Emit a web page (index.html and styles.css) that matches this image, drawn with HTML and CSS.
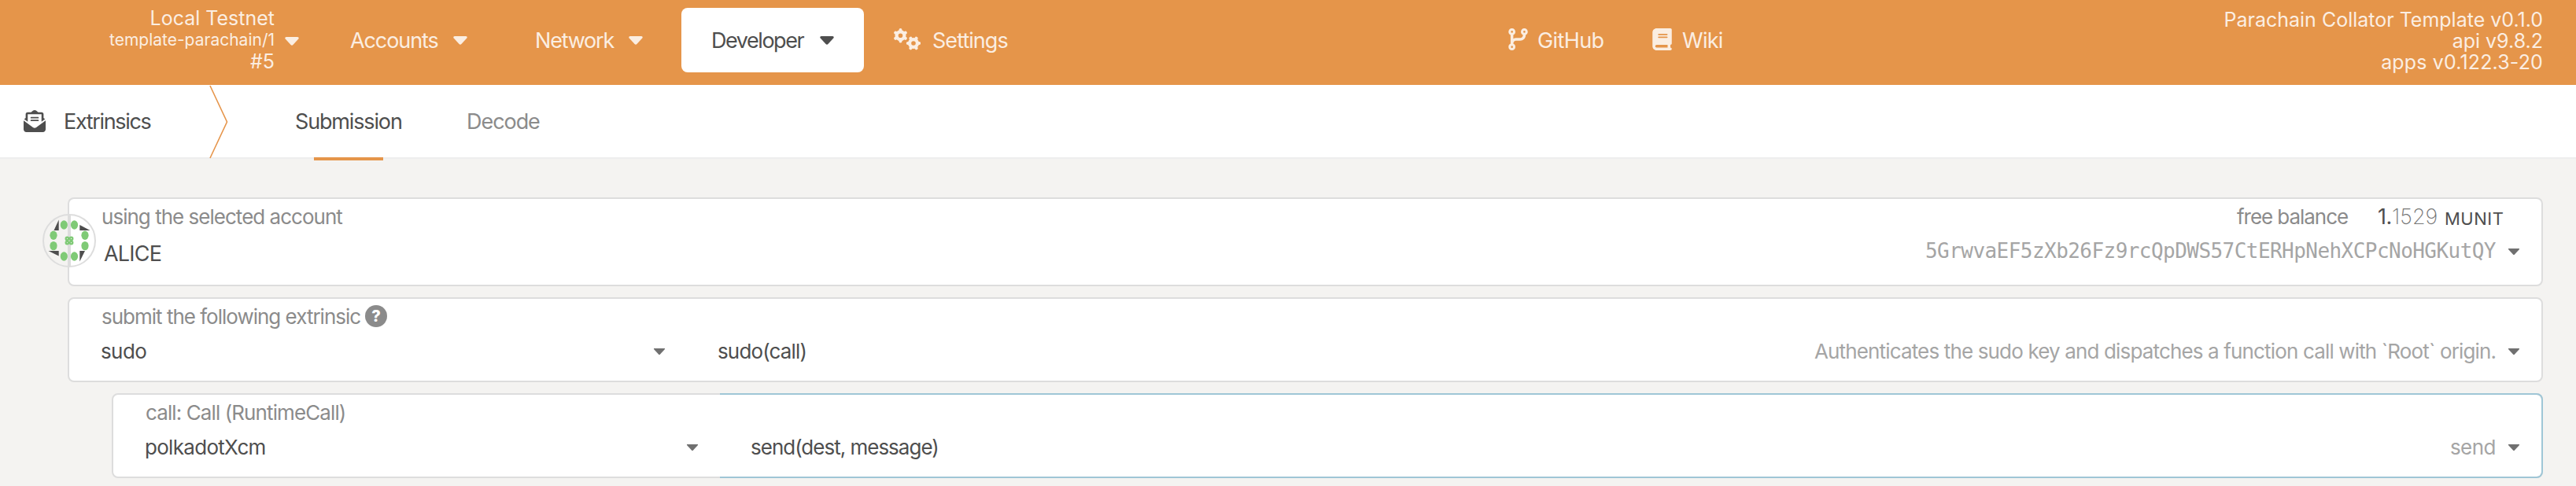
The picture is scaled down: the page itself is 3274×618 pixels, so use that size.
FILE: index.html
```html
<!DOCTYPE html>
<html lang="en">
<head>
<meta charset="utf-8">
<title>Extrinsics</title>
<link rel="stylesheet" href="styles.css">
</head>
<body>
<header class="topbar">
  <div class="chain">
    <div class="chain-name"><span>Local Testnet</span></div>
    <div class="chain-spec"><span>template-parachain/1</span></div>
    <div class="chain-block"><span>#5</span></div>
  </div>
  <svg class="caret caret-chain" viewBox="0 0 18 11"><path d="M1.8 0H16.2Q18.6 .6 17.3 2.4L10.4 10Q9 11.4 7.6 10L.7 2.4Q-.6 .6 1.8 0Z"/></svg>
  <div class="nav nav-accounts"><span class="accounts">Accounts</span><svg class="caret" viewBox="0 0 18 11"><path d="M1.8 0H16.2Q18.6 .6 17.3 2.4L10.4 10Q9 11.4 7.6 10L.7 2.4Q-.6 .6 1.8 0Z"/></svg></div>
  <div class="nav nav-network"><span class="network">Network</span><svg class="caret" viewBox="0 0 18 11"><path d="M1.8 0H16.2Q18.6 .6 17.3 2.4L10.4 10Q9 11.4 7.6 10L.7 2.4Q-.6 .6 1.8 0Z"/></svg></div>
  <div class="nav nav-developer"><span class="developer">Developer</span><svg class="caret" viewBox="0 0 18 11"><path d="M1.8 0H16.2Q18.6 .6 17.3 2.4L10.4 10Q9 11.4 7.6 10L.7 2.4Q-.6 .6 1.8 0Z"/></svg></div>
  <div class="nav nav-settings">
    <svg class="gears" viewBox="0 0 34 28" fill="none" stroke="currentColor">
      <circle cx="8.5" cy="9.2" r="4.9" stroke-width="4.2"/><path stroke-width="4" stroke-linecap="round" d="M8.500 2V3.400M8.500 15V16.400M2.200 5.600L3.500 6.300M13.500 12.100L14.800 12.800M2.200 12.800L3.500 12.100M13.500 6.300L14.800 5.600"/>
      <circle cx="25" cy="19" r="4.9" stroke-width="4.2"/><path stroke-width="4" stroke-linecap="round" d="M17.800 19H19.200M30.800 19H32.200M21.400 12.700L22.100 14M27.900 24L28.600 25.300M28.600 12.700L27.900 14M22.100 24L21.400 25.300"/>
    </svg><span class="settings">Settings</span></div>
  <div class="nav nav-github"><svg class="fork" viewBox="0 0 448 512"><path fill="currentColor" d="M80 104a24 24 0 1 0 0-48 24 24 0 1 0 0 48zm80-24c0 32.800-19.700 61-48 73.300v87.800c18.800-10.900 40.700-17.100 64-17.100h96c35.300 0 64-28.700 64-64v-6.700C307.700 141 288 112.800 288 80c0-44.200 35.800-80 80-80s80 35.800 80 80c0 32.800-19.700 61-48 73.300V160c0 70.700-57.300 128-128 128H176c-35.300 0-64 28.700-64 64v6.700c28.300 12.300 48 40.500 48 73.300 0 44.200-35.800 80-80 80S0 476.200 0 432c0-32.800 19.700-61 48-73.300V153.300C19.700 141 0 112.800 0 80 0 35.800 35.800 0 80 0s80 35.800 80 80zm232 0a24 24 0 1 0-48 0 24 24 0 1 0 48 0zM80 456a24 24 0 1 0 0-48 24 24 0 1 0 0 48z"/></svg><span class="github">GitHub</span></div>
  <div class="nav nav-wiki"><svg class="book" viewBox="0 0 448 512"><path fill="currentColor" d="M96 0C43 0 0 43 0 96v320c0 53 43 96 96 96h320c17.700 0 32-14.300 32-32s-14.300-32-32-32v-64c17.700 0 32-14.300 32-32V32c0-17.700-14.300-32-32-32H96zm0 384h256v64H96c-17.700 0-32-14.300-32-32s14.300-32 32-32zm32-240c0-8.800 7.200-16 16-16h192c8.800 0 16 7.200 16 16s-7.200 16-16 16H144c-8.800 0-16-7.200-16-16zm16 48h192c8.800 0 16 7.200 16 16s-7.200 16-16 16H144c-8.800 0-16-7.200-16-16s7.200-16 16-16z"/></svg><span class="wiki">Wiki</span></div>
  <div class="versions">
    <div><span>Parachain Collator Template v0.1.0</span></div>
    <div><span>api v9.8.2</span></div>
    <div><span class="apps">apps v0.122.3-20</span></div>
  </div>
</header>
<nav class="tabs">
  <svg class="envelope" viewBox="0 0 512 512"><g fill="currentColor"><path d="M215.400 48H339.400L289.500 11Q256 -11 222.500 11L172.600 48ZM96 48H416Q464 48 464 96V181L493 204Q512 219 505 204L416 270V96H96V270L7 204Q0 219 19 204L48 181V96Q48 48 96 48Z"/><path d="M0 448V242L217.600 403.300C228.700 411.500 242.200 416 256 416S283.300 411.600 294.400 403.300L512 242V448C512 483.300 483.300 512 448 512H64C28.700 512 0 483.300 0 448Z"/><path d="M176 160H336Q352 160 352 176T336 192H176Q160 192 160 176T176 160ZM176 224H336Q352 224 352 240T336 256H176Q160 256 160 240T176 224Z"/></g></svg>
  <span class="title">Extrinsics</span>
  <svg class="divider" viewBox="0 0 24 94"><path d="M1 1L22.500 47L1 93" fill="none" stroke="#e6954a" stroke-width="1.600"/></svg>
  <div class="tab tab-active"><span class="submission">Submission</span></div>
  <div class="tab"><span class="decode">Decode</span></div>
</nav>
<main>
  <section class="card card-account">
    <svg class="identicon" viewBox="0 0 68 68">
      <circle cx="34" cy="34" r="33" fill="none" stroke="#ddd" stroke-width="2"/>
      <path d="M35 2V66" stroke="#ddd" stroke-width="2"/>
      <g fill="#7fca76"><ellipse cx="27.300" cy="14" rx="4.600" ry="5.700"/><ellipse cx="40.500" cy="14" rx="4.600" ry="5.700"/><ellipse cx="27.300" cy="54" rx="4.600" ry="5.700"/><ellipse cx="40.500" cy="54" rx="4.600" ry="5.700"/><ellipse cx="14" cy="27.300" rx="4.600" ry="5.700"/><ellipse cx="14" cy="40.600" rx="4.600" ry="5.700"/><ellipse cx="54" cy="27.300" rx="4.600" ry="5.700"/><ellipse cx="54" cy="40.600" rx="4.600" ry="5.700"/></g>
      <g fill="none" stroke="#7fca76" stroke-width="2.300"><circle cx="31.400" cy="31.400" r="1.700"/><circle cx="36.600" cy="31.400" r="1.700"/><circle cx="31.400" cy="36.600" r="1.700"/><circle cx="36.600" cy="36.600" r="1.700"/></g>
      <path fill="#4e4e4e" d="M20.700 7.500V21H14.500ZM47.300 14V21H60.500ZM7.500 47H20.700V53.500ZM47.300 47H54L47.300 60.500Z"/>
    </svg>
    <div class="row row-label"><span class="lbl using">using the selected account</span><span class="lbl free">free balance</span><span class="one">1.</span><span class="frac">1529</span><span class="unit">MUNIT</span></div>
    <div class="row row-value"><span class="alice">ALICE</span><span class="address">5GrwvaEF5zXb26Fz9rcQpDWS57CtERHpNehXCPcNoHGKutQY</span><i class="arrow"></i></div>
  </section>
  <section class="card card-extrinsic">
    <div class="row row-label"><span class="lbl submit">submit the following extrinsic</span><span class="help">?</span></div>
    <div class="row row-value"><span class="val sudo">sudo</span><i class="arrow arrow-mid"></i><span class="val sudocall">sudo(call)</span><span class="desc auth">Authenticates the sudo key and dispatches a function call with `Root` origin.</span><i class="arrow"></i></div>
  </section>
  <section class="card card-call">
    <div class="focus"></div>
    <div class="row row-label"><span class="lbl call">call: Call (RuntimeCall)</span></div>
    <div class="row row-value"><span class="val xcm">polkadotXcm</span><i class="arrow arrow-mid"></i><span class="val senddest">send(dest, message)</span><span class="desc send">send</span><i class="arrow"></i></div>
  </section>
</main>
</body>
</html>
```
FILE: styles.css
```css
* { box-sizing: border-box; }
body { margin: 0; background: #f4f3f1; color: #4e4e4e; font: 400 27px/28px Inter, "Liberation Sans", sans-serif; height: 618px; overflow: hidden; }
span { white-space: nowrap; display: block; flex: none; }
svg { display: block; flex: none; }

/* top bar */
.topbar { display: flex; align-items: flex-start; height: 108px; background: #e5954a; color: #fbeee2; }
.chain { width: 349px; padding-top: 9px; font-size: 25px; line-height: 28px; display: flex; flex-direction: column; align-items: flex-end; flex: none; }
.chain-spec { font-size: 21px; line-height: 27px; }
.caret { width: 18px; height: 11px; fill: currentColor; margin: 1px 0 0 auto; }
.caret-chain { margin: 47px 0 0 13px; }
.nav { display: flex; align-items: center; height: 82px; margin-top: 10px; flex: none; }
.nav span { padding-top: 2px; }
.nav-accounts { margin-left: 65px; width: 149px; }
.nav-network { margin-left: 86px; width: 137px; }
.nav-developer { margin-left: 49px; width: 232px; padding: 0 38px 0 38px; background: #fff; color: #4e4e4e; border-radius: 8px; }
.nav-settings { margin-left: 38px; width: 145px; }
.gears { width: 34px; height: 28px; margin: -2px 15px 0 0; }
.nav-github { margin-left: 636px; width: 123px; }
.fork { width: 25px; height: 28px; margin: -2px 12px 0 0; }
.nav-wiki { margin-left: 60px; width: 92px; }
.book { width: 25px; height: 28px; margin: -2px 13px 0 0; }
.accounts { letter-spacing: -1.1px; }
.network { letter-spacing: -1.2px; }
.developer { letter-spacing: -1.45px; }
.settings { letter-spacing: -.95px; }
.github { letter-spacing: -.6px; }
.wiki { letter-spacing: -.7px; }
.versions { margin-left: auto; margin-right: 42px; padding-top: 12px; font-size: 25px; line-height: 27px; display: flex; flex-direction: column; align-items: flex-end; }
.apps { letter-spacing: .15px; }

/* tabs */
.tabs { display: flex; align-items: center; height: 94px; background: #fff; border-bottom: 2px solid #eee; }
.envelope { width: 28px; height: 28px; margin-left: 30px; overflow: visible; }
.title { margin-left: 23px; width: 185px; padding-top: 2px; letter-spacing: -1.35px; }
.divider { width: 24px; height: 94px; margin-top: 2px; }
.tab { align-self: flex-start; padding-top: 33px; }
.tab-active { margin-left: 84px; width: 135px; }
.tab-active::after { content: ""; display: block; width: 88px; height: 4px; margin: 31px 0 0 25px; background: #e5954a; }
.submission { letter-spacing: -1.15px; padding-left: 1px; }
.decode { margin-left: 84px; color: #8b8b8b; letter-spacing: -1.05px; }

/* cards */
main { display: flex; flex-direction: column; gap: 14px; padding: 49px 42px 0 86px; }
.card { position: relative; height: 108px; padding: 5px 28px 0 40px; background: #fff; border: 2px solid #ddd; border-radius: 8px; }
.card-account { height: 113px; }
.card-call { margin-left: 56px; }
.row { display: flex; height: 36px; align-items: center; }
.row-value { height: 52px; }
.identicon { position: absolute; left: -34px; top: 19px; width: 68px; height: 68px; }
.lbl, .val, .desc { font-size: 26px; }
.lbl { color: #8b8b8b; }
.desc { color: #a5a5a5; margin-left: auto; }
.using { letter-spacing: -.98px; padding-left: 1px; }
.submit { width: 336px; padding-left: 1px; letter-spacing: -1px; }
.call { letter-spacing: -.9px; padding-left: 1px; }
.free { margin-left: auto; width: 179px; letter-spacing: -1.05px; }
.one { width: 18px; letter-spacing: -.5px; }
.frac { width: 67px; font-weight: 200; color: #777; }
.unit { width: 95px; font-size: 22px; padding-top: 3px; letter-spacing: .5px; }
.alice { padding: 5px 0 0; margin-left: 4px; letter-spacing: -.8px; }
.address { width: 742px; padding-left: 1px; padding-bottom: 2px; font: 26px/28px "DejaVu Sans Mono", monospace; letter-spacing: -.55px; color: #a5a5a5; margin-left: auto; }
.help { width: 28px; height: 28px; margin-top: -2px; border-radius: 50%; background: #8b8b8b; color: #fff; text-align: center; font-weight: 800; font-size: 20px; }
.arrow { flex: none; width: 14px; height: 8px; background: #707070; clip-path: polygon(0 0, 100% 0, 100% 12%, 54% 100%, 46% 100%, 0 12%); }
.sudo { width: 703px; letter-spacing: -.6px; }
.xcm { width: 689px; letter-spacing: -.7px; }
.sudocall, .senddest { margin-left: 67px; }
.sudocall { letter-spacing: -.85px; }
.senddest { letter-spacing: -1px; }
.auth { width: 882px; letter-spacing: -.85px; }
.send { width: 74px; letter-spacing: -.6px; }
.focus { position: absolute; top: -2px; right: -2px; bottom: -2px; left: 771px; border: 2px solid #9fc6d6; border-left: 0; border-radius: 0 8px 8px 0; }
```
